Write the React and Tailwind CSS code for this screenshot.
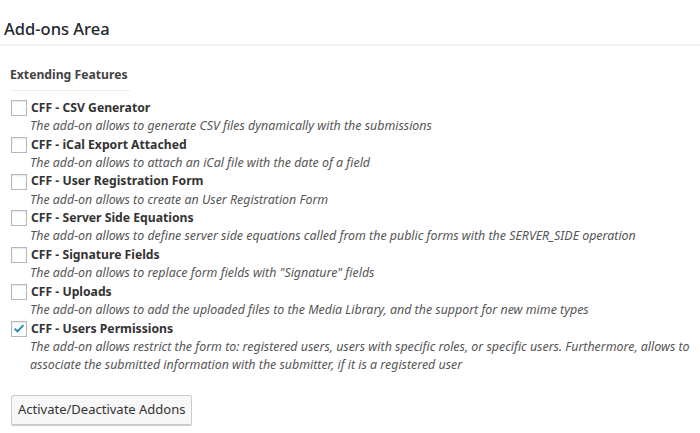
import React, { useState } from 'react';

const addons = [
  {
    id: 'csv',
    title: 'CFF - CSV Generator',
    desc: 'The add-on allows to generate CSV files dynamically with the submissions',
  },
  {
    id: 'ical',
    title: 'CFF - iCal Export Attached',
    desc: 'The add-on allows to attach an iCal file with the date of a field',
  },
  {
    id: 'registration',
    title: 'CFF - User Registration Form',
    desc: 'The add-on allows to create an User Registration Form',
  },
  {
    id: 'server',
    title: 'CFF - Server Side Equations',
    desc: 'The add-on allows to define server side equations called from the public forms with the SERVER_SIDE operation',
  },
  {
    id: 'signature',
    title: 'CFF - Signature Fields',
    desc: 'The add-on allows to replace form fields with "Signature" fields',
  },
  {
    id: 'uploads',
    title: 'CFF - Uploads',
    desc: 'The add-on allows to add the uploaded files to the Media Library, and the support for new mime types',
  },
  {
    id: 'permissions',
    title: 'CFF - Users Permissions',
    desc: 'The add-on allows restrict the form to: registered users, users with specific roles, or specific users. Furthermore, allows to associate the submitted information with the submitter, if it is a registered user',
  },
];

// checkbox styled like the wp-admin one
function Checkbox({ checked, onChange }) {
  return (
    <button
      type="button"
      onClick={onChange}
      className="w-4 h-4 shrink-0 border border-[#b4b9be] bg-white shadow-[inset_0_1px_2px_rgba(0,0,0,0.1)] flex items-center justify-center"
    >
      {checked && (
        <svg viewBox="0 0 16 16" className="w-[15px] h-[15px]">
          <path d="M3 8.2 L6.3 11.4 L13 4.2" fill="none" stroke="#1e8cbe" strokeWidth="2.2" />
        </svg>
      )}
    </button>
  );
}

export default function App() {
  const [active, setActive] = useState({ permissions: true });

  const toggle = (id) => setActive((prev) => ({ ...prev, [id]: !prev[id] }));

  return (
    <div className="w-[700px] h-[433px] bg-white text-[#444] font-['Noto_Sans','Open_Sans',sans-serif] overflow-hidden">
      <div className="h-[46px] border-b-2 border-[#f1f1f1] flex items-end pb-[3px] pl-1">
        <h2 className="text-[16.5px] leading-[24px] font-medium text-[#23282d]">Add-ons Area</h2>
      </div>

      <div className="pl-[10px] pr-1 pt-[15px]">
        <h3 className="inline-block text-[12.2px] font-bold leading-[20px] pb-[5px] border-b border-[#eee] pr-[2px]">
          Extending Features
        </h3>

        <div className="mt-[8px]">
          {addons.map((a) => (
            <div key={a.id} className="pl-[1px] pb-[0.8px]">
              <label className="flex items-center gap-[4px] h-[18px]">
                <Checkbox checked={!!active[a.id]} onChange={() => toggle(a.id)} />
                <span className="text-[12.2px] font-bold text-[#333]">{a.title}</span>
              </label>
              <div className="pl-[19px] text-[12.4px] italic leading-[18px] text-[#555] min-h-[18px]">
                {a.desc}
              </div>
            </div>
          ))}
        </div>

        <button
          type="button"
          className="mt-[20px] ml-[1px] h-[30px] px-[6px] border border-[#ccc] bg-[#f7f7f7] rounded-[2px] shadow-[0_1px_0_#ccc] text-[13px] text-[#333]"
        >
          Activate/Deactivate Addons
        </button>
      </div>
    </div>
  );
}
